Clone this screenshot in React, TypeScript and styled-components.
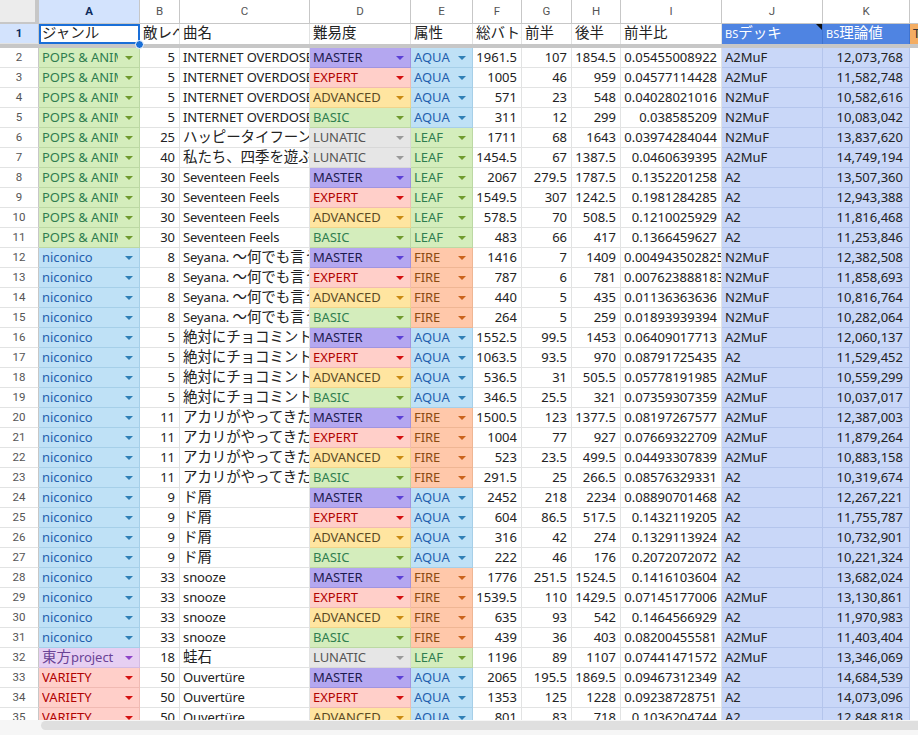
import React from "react";
import styled, { createGlobalStyle, css } from "styled-components";

type Tone = "green" | "blue" | "lavender" | "red" | "yellow" | "purple" | "gray" | "orange";

const tones: Record<Tone, { bg: string; fg: string; line: string }> = {
  green: { bg: "#d4edbc", fg: "#2f7d4f", line: "#bcd8a4" },
  blue: { bg: "#bfe1f6", fg: "#1f5fae", line: "#a6cfe8" },
  lavender: { bg: "#e6cff2", fg: "#6a4396", line: "#d4bbe2" },
  red: { bg: "#ffcfc9", fg: "#b10202", line: "#f0bab3" },
  yellow: { bg: "#ffe5a0", fg: "#5b4a24", line: "#f0d48c" },
  purple: { bg: "#b4a7f0", fg: "#1c1a4e", line: "#a094e0" },
  gray: { bg: "#e6e6e6", fg: "#555555", line: "#d8d8d8" },
  orange: { bg: "#ffc8aa", fg: "#8a4a12", line: "#efb694" },
};

const caretColor: Record<Tone, string> = {
  green: "#6f9a2d",
  blue: "#2f7fb5",
  lavender: "#8e44c9",
  red: "#d40f0f",
  yellow: "#c98a12",
  purple: "#5b3fd6",
  gray: "#9a9a9a",
  orange: "#c9621a",
};

const columns = "39px 101px 40px 130px 101px 62px 49px 50px 49px 101px 101px 87px 40px";

const GlobalStyle = createGlobalStyle`
  html, body { margin: 0; padding: 0; background: #fff; overflow: hidden; }
  * { box-sizing: border-box; }
`;

const Sheet = styled.div`
  width: 918px;
  height: 735px;
  display: flex;
  flex-direction: column;
  overflow: hidden;
  position: relative;
  font-family: "Noto Sans", "Noto Sans CJK JP", sans-serif;
  font-size: 13px;
  color: #222;
`;

const Row = styled.div<{ $h?: number }>`
  display: grid;
  grid-template-columns: ${columns};
  height: ${(p) => p.$h ?? 20}px;
  flex: none;
`;

const ColHead = styled.div<{ $active?: boolean }>`
  border-right: 1px solid #c7c7c7;
  border-bottom: 1px solid #c7c7c7;
  text-align: center;
  font-family: "Roboto", "Liberation Sans", sans-serif;
  font-size: 11.5px;
  line-height: 22px;
  color: ${(p) => (p.$active ? "#0b2a5c" : "#555")};
  font-weight: ${(p) => (p.$active ? 700 : 400)};
  background: ${(p) => (p.$active ? "#d3e3fd" : "#fff")};
`;

const Corner = styled.div`
  background: #ececec;
  border-right: 4px solid #c7c7c7;
  border-bottom: 2px solid #c7c7c7;
`;

const RowHead = styled.div<{ $active?: boolean }>`
  border-right: 1px solid #c7c7c7;
  border-bottom: 1px solid #e2e3e3;
  text-align: center;
  font-family: "Roboto", "Liberation Sans", sans-serif;
  font-size: 11.5px;
  line-height: 18px;
  color: ${(p) => (p.$active ? "#0b2a5c" : "#555")};
  font-weight: ${(p) => (p.$active ? 700 : 400)};
  background: ${(p) => (p.$active ? "#d3e3fd" : "#fff")};
`;

const cellBase = css`
  border-right: 1px solid #e2e3e3;
  border-bottom: 1px solid #e2e3e3;
  line-height: 19px;
  padding: 0 3px;
  white-space: nowrap;
  overflow: hidden;
`;

const TextCell = styled.div`
  ${cellBase}
  letter-spacing: -0.1px;
`;

const NumCell = styled.div`
  ${cellBase}
  padding-right: 4px;
  text-align: right;
`;

const HeadCell = styled.div`
  ${cellBase}
  position: relative;
  border-bottom: none;
  line-height: 19px;
  padding-right: 0;
`;

const SelectedCell = styled(HeadCell)`
  outline: 2px solid #1a6fd8;
  outline-offset: -2px;
  z-index: 2;
  overflow: visible;
`;

const Handle = styled.span`
  position: absolute;
  right: -5px;
  bottom: -5px;
  width: 9px;
  height: 9px;
  border-radius: 50%;
  background: #1a6fd8;
  border: 1px solid #fff;
`;

const BlueHead = styled(HeadCell)<{ $note?: boolean }>`
  background: #4f84e2;
  color: #fff;
  border-right: 1px solid #3f73cf;
  ${(p) =>
    p.$note &&
    css`
      &::after {
        content: "";
        position: absolute;
        top: 0;
        right: 0;
        border-top: 6px solid #111;
        border-left: 6px solid transparent;
      }
    `}
`;

const OrangeHead = styled(HeadCell)`
  background: #f4ad62;
  color: #333;
`;

const SmallTag = styled.span`
  font-size: 11px;
`;

const Cjk = styled.span`
  font-family: "Noto Sans CJK JP", sans-serif;
  font-size: 14.5px;
  line-height: 1;
`;

const DeckCell = styled.div`
  ${cellBase}
  background: #c9d7f8;
  border-right-color: #b4c5ec;
  border-bottom-color: #b4c5ec;
`;

const DeckNum = styled(DeckCell)`
  padding-right: 6px;
  text-align: right;
`;

const Chip = styled.div<{ $tone: Tone }>`
  display: flex;
  align-items: center;
  padding: 0 6px 0 3px;
  height: 100%;
  line-height: 19px;
  overflow: hidden;
  white-space: nowrap;
  background: ${(p) => tones[p.$tone].bg};
  color: ${(p) => tones[p.$tone].fg};
  border-right: 1px solid ${(p) => tones[p.$tone].line};
  border-bottom: 1px solid ${(p) => tones[p.$tone].line};
`;

const ChipLabel = styled.span`
  flex: 1;
  min-width: 0;
  overflow: hidden;
  letter-spacing: -0.04px;
`;

const Caret = styled.span<{ $tone: Tone }>`
  flex: none;
  margin-left: 7px;
  width: 0;
  height: 0;
  border-left: 4px solid transparent;
  border-right: 4px solid transparent;
  border-top: 4px solid ${(p) => caretColor[p.$tone]};
`;

const FreezeBar = styled.div`
  height: 4px;
  flex: none;
  background: #c7c7c7;
`;

const Body = styled.div`
  flex: 1;
  min-height: 0;
  overflow: hidden;
`;

const ScrollFooter = styled.div`
  flex: none;
  height: 15px;
  background: #f6f6f6;
  padding: 1px 0 5px 41px;
`;

const ScrollThumb = styled.div`
  height: 100%;
  background: #dfdfdf;
  border-radius: 5px 0 0 5px;
`;

const cjkPattern = /([\u3000-\u30ff\u3400-\u9fff\uff00-\uffef]+)/;

function Mixed({ text }: { text: string }) {
  return (
    <>
      {text.split(cjkPattern).map((part, i) =>
        cjkPattern.test(part) ? <Cjk key={i}>{part}</Cjk> : part ? <React.Fragment key={i}>{part}</React.Fragment> : null,
      )}
    </>
  );
}

function Dropdown({ label, tone }: { label: string; tone: Tone }) {
  return (
    <Chip $tone={tone}>
      <ChipLabel>
        <Mixed text={label} />
      </ChipLabel>
      <Caret $tone={tone} />
    </Chip>
  );
}

const genres: Record<string, [string, Tone]> = {
  p: ["POPS & ANIME", "green"],
  n: ["niconico", "blue"],
  t: ["東方project", "lavender"],
  v: ["VARIETY", "red"],
};
const levels: Record<string, [string, Tone]> = {
  M: ["MASTER", "purple"],
  E: ["EXPERT", "red"],
  A: ["ADVANCED", "yellow"],
  B: ["BASIC", "green"],
  L: ["LUNATIC", "gray"],
};
const attrs: Record<string, [string, Tone]> = {
  a: ["AQUA", "blue"],
  l: ["LEAF", "green"],
  f: ["FIRE", "orange"],
};

const IO = "INTERNET OVERDOSE";
const SF = "Seventeen Feels";
const SY = "Seyana. ～何でも言うことを聞いてくれるアカネチャン～";
const CM = "絶対にチョコミントを食べるアオイチャン";
const AK = "アカリがやってきたぞっ";
const DK = "ド屑";
const SN = "snooze";
const OV = "Ouvertüre";

type Rec = [string, string, string, string, string, string, string, string, string, string, string];

const rows: Rec[] = [
  ["p", "5", IO, "M", "a", "1961.5", "107", "1854.5", "0.05455008922", "A2MuF", "12,073,768"],
  ["p", "5", IO, "E", "a", "1005", "46", "959", "0.04577114428", "A2MuF", "11,582,748"],
  ["p", "5", IO, "A", "a", "571", "23", "548", "0.04028021016", "N2MuF", "10,582,616"],
  ["p", "5", IO, "B", "a", "311", "12", "299", "0.038585209", "N2MuF", "10,083,042"],
  ["p", "25", "ハッピータイフーン", "L", "l", "1711", "68", "1643", "0.03974284044", "N2MuF", "13,837,620"],
  ["p", "40", "私たち、四季を遊ぶ", "L", "l", "1454.5", "67", "1387.5", "0.0460639395", "A2MuF", "14,749,194"],
  ["p", "30", SF, "M", "l", "2067", "279.5", "1787.5", "0.1352201258", "A2", "13,507,360"],
  ["p", "30", SF, "E", "l", "1549.5", "307", "1242.5", "0.1981284285", "A2", "12,943,388"],
  ["p", "30", SF, "A", "l", "578.5", "70", "508.5", "0.1210025929", "A2", "11,816,468"],
  ["p", "30", SF, "B", "l", "483", "66", "417", "0.1366459627", "A2", "11,253,846"],
  ["n", "8", SY, "M", "f", "1416", "7", "1409", "0.004943502825", "N2MuF", "12,382,508"],
  ["n", "8", SY, "E", "f", "787", "6", "781", "0.007623888183", "N2MuF", "11,858,693"],
  ["n", "8", SY, "A", "f", "440", "5", "435", "0.01136363636", "N2MuF", "10,816,764"],
  ["n", "8", SY, "B", "f", "264", "5", "259", "0.01893939394", "N2MuF", "10,282,064"],
  ["n", "5", CM, "M", "a", "1552.5", "99.5", "1453", "0.06409017713", "A2MuF", "12,060,137"],
  ["n", "5", CM, "E", "a", "1063.5", "93.5", "970", "0.08791725435", "A2", "11,529,452"],
  ["n", "5", CM, "A", "a", "536.5", "31", "505.5", "0.05778191985", "A2MuF", "10,559,299"],
  ["n", "5", CM, "B", "a", "346.5", "25.5", "321", "0.07359307359", "A2MuF", "10,037,017"],
  ["n", "11", AK, "M", "f", "1500.5", "123", "1377.5", "0.08197267577", "A2MuF", "12,387,003"],
  ["n", "11", AK, "E", "f", "1004", "77", "927", "0.07669322709", "A2MuF", "11,879,264"],
  ["n", "11", AK, "A", "f", "523", "23.5", "499.5", "0.04493307839", "A2MuF", "10,883,158"],
  ["n", "11", AK, "B", "f", "291.5", "25", "266.5", "0.08576329331", "A2", "10,319,674"],
  ["n", "9", DK, "M", "a", "2452", "218", "2234", "0.08890701468", "A2", "12,267,221"],
  ["n", "9", DK, "E", "a", "604", "86.5", "517.5", "0.1432119205", "A2", "11,755,787"],
  ["n", "9", DK, "A", "a", "316", "42", "274", "0.1329113924", "A2", "10,732,901"],
  ["n", "9", DK, "B", "a", "222", "46", "176", "0.2072072072", "A2", "10,221,324"],
  ["n", "33", SN, "M", "f", "1776", "251.5", "1524.5", "0.1416103604", "A2", "13,682,024"],
  ["n", "33", SN, "E", "f", "1539.5", "110", "1429.5", "0.07145177006", "A2MuF", "13,130,861"],
  ["n", "33", SN, "A", "f", "635", "93", "542", "0.1464566929", "A2", "11,970,983"],
  ["n", "33", SN, "B", "f", "439", "36", "403", "0.08200455581", "A2MuF", "11,403,404"],
  ["t", "18", "蛙石", "L", "l", "1196", "89", "1107", "0.07441471572", "A2MuF", "13,346,069"],
  ["v", "50", OV, "M", "a", "2065", "195.5", "1869.5", "0.09467312349", "A2", "14,684,539"],
  ["v", "50", OV, "E", "a", "1353", "125", "1228", "0.09238728751", "A2", "14,073,096"],
  ["v", "50", OV, "A", "a", "801", "83", "718", "0.1036204744", "A2", "12,848,818"],
];

const letters = ["A", "B", "C", "D", "E", "F", "G", "H", "I", "J", "K", ""];

export default function App() {
  return (
    <Sheet>
      <GlobalStyle />
      <Row $h={24}>
        <Corner />
        {letters.map((l, i) => (
          <ColHead key={i} $active={l === "A"}>
            {l}
          </ColHead>
        ))}
      </Row>
      <Row>
        <RowHead $active>1</RowHead>
        <SelectedCell>
          <Mixed text="ジャンル" />
          <Handle />
        </SelectedCell>
        <HeadCell><Mixed text="敵レベル" /></HeadCell>
        <HeadCell><Mixed text="曲名" /></HeadCell>
        <HeadCell><Mixed text="難易度" /></HeadCell>
        <HeadCell><Mixed text="属性" /></HeadCell>
        <HeadCell><Mixed text="総バトル" /></HeadCell>
        <HeadCell><Mixed text="前半" /></HeadCell>
        <HeadCell><Mixed text="後半" /></HeadCell>
        <HeadCell><Mixed text="前半比" /></HeadCell>
        <BlueHead $note>
          <SmallTag>BS</SmallTag>
          <Mixed text="デッキ" />
        </BlueHead>
        <BlueHead>
          <SmallTag>BS</SmallTag>
          <Mixed text="理論値" />
        </BlueHead>
        <OrangeHead>TS</OrangeHead>
      </Row>
      <FreezeBar />
      <Body>
        {rows.map((r, i) => (
          <Row key={i}>
            <RowHead>{i + 2}</RowHead>
            <Dropdown label={genres[r[0]][0]} tone={genres[r[0]][1]} />
            <NumCell>{r[1]}</NumCell>
            <TextCell>
              <Mixed text={r[2]} />
            </TextCell>
            <Dropdown label={levels[r[3]][0]} tone={levels[r[3]][1]} />
            <Dropdown label={attrs[r[4]][0]} tone={attrs[r[4]][1]} />
            <NumCell>{r[5]}</NumCell>
            <NumCell>{r[6]}</NumCell>
            <NumCell>{r[7]}</NumCell>
            <NumCell>{r[8]}</NumCell>
            <DeckCell>{r[9]}</DeckCell>
            <DeckNum>{r[10]}</DeckNum>
          </Row>
        ))}
      </Body>
      <ScrollFooter>
        <ScrollThumb />
      </ScrollFooter>
    </Sheet>
  );
}
